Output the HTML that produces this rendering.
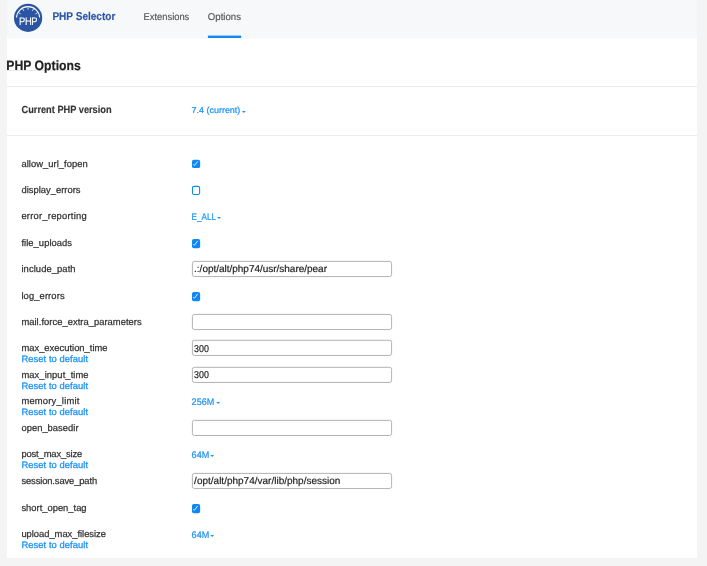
<!DOCTYPE html>
<html lang="en">
<head>
<meta charset="utf-8">
<title>PHP Selector</title>
<style>
html,body{margin:0;padding:0;}
body{width:707px;height:566px;background:#f4f4f4;position:relative;overflow:hidden;font-family:"Liberation Sans",sans-serif;color:#333;font-size:9.4px;}
#wrap{position:absolute;left:0;top:0;width:707px;height:566px;will-change:transform;}
#panel{position:absolute;left:7px;top:0;width:690px;height:558px;background:#fff;}
#hdr{position:absolute;left:7px;top:0;width:690px;height:39px;background:linear-gradient(to bottom,#f7f8fa 0,#f7f8fa 38px,#f9fafb 38px,#f9fafb 39px);border-radius:0 0 3px 3px;}
.hr{position:absolute;left:7px;width:690px;height:1px;background:#ececec;}
#ov{position:absolute;left:0;top:0;font-family:"Liberation Sans",sans-serif;text-rendering:geometricPrecision;}
#ov text{white-space:pre;}
</style>
</head>
<body>
<div id="wrap">
<div id="panel"></div>
<div id="hdr"></div>
<div class="hr" style="top:86px"></div>
<div class="hr" style="top:135px"></div>
<div style="position:absolute;left:7px;top:70px;width:74px;height:1px;background:#e4eaed"></div>
<svg id="ov" width="707" height="566" viewBox="0 0 707 566">
<g transform="translate(14 3.8)">
  <circle cx="14.1" cy="14.1" r="14.1" fill="#2a55a3"/>
  <path d="M2.52 13.75A11.6 11.6 0 0 1 25.68 13.75" fill="none" stroke="#fff" stroke-width="1.1"/>
  <path d="M23.28 9.15L21.46 10.20M19.40 5.27L18.35 7.09M14.10 3.85L14.10 5.95M8.80 5.27L9.85 7.09M4.92 9.15L6.74 10.20" stroke="#fff" stroke-width="0.9" opacity="0.9" fill="none"/>
  <text transform="translate(14.15 21) rotate(0.02) scale(0.86 1)" text-anchor="middle" font-size="10.9" fill="#fff" stroke="#fff" stroke-width="0.12" letter-spacing="-0.45">PHP</text>
</g>
<rect x="207.9" y="35.6" width="33.2" height="2.4" fill="#1489f2"/>
<rect x="191.95" y="159.8" width="8.2" height="8.3" rx="1.9" fill="#0f87f4"/>
<path d="M193.25 164.55L194.40 165.45L197.75 161.40" fill="none" stroke="#fff" stroke-width="0.95" stroke-opacity="0.9"/>
<rect x="192.5" y="186.35000000000002" width="7.1" height="8.200000000000001" rx="1.6" fill="#fff" stroke="#0f8bf4" stroke-width="1.1"/>
<rect x="191.95" y="239.0" width="8.2" height="9.2" rx="1.9" fill="#0f87f4"/>
<path d="M193.25 244.27L194.40 245.26L197.75 240.77" fill="none" stroke="#fff" stroke-width="0.95" stroke-opacity="0.9"/>
<rect x="192.4" y="261.40" width="199.2" height="15.15" rx="2.1" fill="#fff" stroke="#9e9e9e" stroke-width="0.8"/>
<rect x="191.95" y="292.0" width="8.2" height="9.2" rx="1.9" fill="#0f87f4"/>
<path d="M193.25 297.27L194.40 298.26L197.75 293.77" fill="none" stroke="#fff" stroke-width="0.95" stroke-opacity="0.9"/>
<rect x="192.4" y="314.40" width="199.2" height="15.15" rx="2.1" fill="#fff" stroke="#9e9e9e" stroke-width="0.8"/>
<rect x="192.4" y="340.30" width="199.2" height="15.15" rx="2.1" fill="#fff" stroke="#9e9e9e" stroke-width="0.8"/>
<rect x="192.4" y="367.30" width="199.2" height="15.15" rx="2.1" fill="#fff" stroke="#9e9e9e" stroke-width="0.8"/>
<rect x="192.4" y="420.35" width="199.2" height="15.15" rx="2.1" fill="#fff" stroke="#9e9e9e" stroke-width="0.8"/>
<rect x="192.4" y="473.40" width="199.2" height="15.15" rx="2.1" fill="#fff" stroke="#9e9e9e" stroke-width="0.8"/>
<rect x="191.95" y="504.0" width="8.2" height="9.2" rx="1.9" fill="#0f87f4"/>
<path d="M193.25 509.27L194.40 510.26L197.75 505.77" fill="none" stroke="#fff" stroke-width="0.95" stroke-opacity="0.9"/>
<path d="M241.90 110.90h3.9l-1.95 2zM217.10 216.90h3.9l-1.95 2zM216.20 401.90h3.9l-1.95 2zM210.20 455.05h3.9l-1.95 2zM210.20 535.05h3.9l-1.95 2z" fill="#1e94f6"/>
<text id="t_title" transform="translate(52.40 20.20) rotate(0.02) scale(0.8900 1)" font-size="11.3" fill="#2a56a6" font-weight="700" stroke="#2a56a6" stroke-width="0.15">PHP Selector</text>
<text id="t_ext" transform="translate(143.60 20.10) rotate(0.02) scale(0.9450 1)" font-size="9.9" fill="#555" stroke="#555" stroke-width="0.15">Extensions</text>
<text id="t_opt" transform="translate(207.80 20.10) rotate(0.02) scale(0.9750 1)" font-size="9.9" fill="#555" stroke="#555" stroke-width="0.15">Options</text>
<text id="t_h1" transform="translate(6.30 70.30) rotate(0.02) scale(0.9050 1)" font-size="13.5" fill="#222" font-weight="700" stroke="#222" stroke-width="0.2">PHP Options</text>
<text id="t_cur" transform="translate(21.50 113.30) rotate(0.02) scale(0.8880 1)" font-size="10.4" fill="#333" font-weight="700" stroke="#333" stroke-width="0.15">Current PHP version</text>
<text id="t_ver" transform="translate(191.50 113.40) rotate(0.02) scale(1.0320 1)" font-size="8.7" fill="#1e94f6" stroke="#1e94f6" stroke-width="0.24">7.4 (current)</text>
<text id="l0" transform="translate(21.40 167.00) rotate(0.02) scale(1.0000 1)" font-size="9.4" fill="#333" letter-spacing="0.043" stroke="#333" stroke-width="0.25">allow_url_fopen</text>
<text id="l1" transform="translate(21.40 193.00) rotate(0.02) scale(1.0000 1)" font-size="9.4" fill="#333" letter-spacing="0.015" stroke="#333" stroke-width="0.25">display_errors</text>
<text id="l2" transform="translate(21.40 218.90) rotate(0.02) scale(1.0000 1)" font-size="9.4" fill="#333" letter-spacing="0.230" stroke="#333" stroke-width="0.25">error_reporting</text>
<text id="v2" transform="translate(191.60 219.85) rotate(0.02) scale(0.8560 1)" font-size="9.5" fill="#1e94f6" stroke="#1e94f6" stroke-width="0.22">E_ALL</text>
<text id="l3" transform="translate(21.40 245.80) rotate(0.02) scale(1.0000 1)" font-size="9.4" fill="#333" letter-spacing="0.054" stroke="#333" stroke-width="0.25">file_uploads</text>
<text id="l4" transform="translate(21.40 272.20) rotate(0.02) scale(1.0000 1)" font-size="9.4" fill="#333" letter-spacing="0.090" stroke="#333" stroke-width="0.25">include_path</text>
<text id="v4" transform="translate(194.10 271.90) rotate(0.02) scale(1.0000 1)" font-size="10.0" fill="#222" letter-spacing="-0.018" stroke="#222" stroke-width="0.18">.:/opt/alt/php74/usr/share/pear</text>
<text id="l5" transform="translate(21.40 298.90) rotate(0.02) scale(1.0000 1)" font-size="9.4" fill="#333" letter-spacing="0.110" stroke="#333" stroke-width="0.25">log_errors</text>
<text id="l6" transform="translate(21.40 324.85) rotate(0.02) scale(1.0000 1)" font-size="9.4" fill="#333" letter-spacing="0.038" stroke="#333" stroke-width="0.25">mail.force_extra_parameters</text>
<text id="l7" transform="translate(21.40 350.60) rotate(0.02) scale(1.0000 1)" font-size="9.4" fill="#333" letter-spacing="0.010" stroke="#333" stroke-width="0.25">max_execution_time</text>
<text id="r7" transform="translate(21.40 361.90) rotate(0.02) scale(1.0000 1)" font-size="9.4" fill="#1e94f6" letter-spacing="0.067" stroke="#1e94f6" stroke-width="0.3">Reset to default</text>
<text id="v7" transform="translate(194.10 351.90) rotate(0.02) scale(0.8850 1)" font-size="10.0" fill="#222" stroke="#222" stroke-width="0.18">300</text>
<text id="l8" transform="translate(21.40 377.70) rotate(0.02) scale(1.0000 1)" font-size="9.4" fill="#333" letter-spacing="0.077" stroke="#333" stroke-width="0.25">max_input_time</text>
<text id="r8" transform="translate(21.40 388.80) rotate(0.02) scale(1.0000 1)" font-size="9.4" fill="#1e94f6" letter-spacing="0.067" stroke="#1e94f6" stroke-width="0.3">Reset to default</text>
<text id="v8" transform="translate(194.10 377.90) rotate(0.02) scale(0.8850 1)" font-size="10.0" fill="#222" stroke="#222" stroke-width="0.18">300</text>
<text id="l9" transform="translate(21.40 403.70) rotate(0.02) scale(1.0000 1)" font-size="9.4" fill="#333" letter-spacing="0.200" stroke="#333" stroke-width="0.25">memory_limit</text>
<text id="r9" transform="translate(21.40 414.95) rotate(0.02) scale(1.0000 1)" font-size="9.4" fill="#1e94f6" letter-spacing="0.067" stroke="#1e94f6" stroke-width="0.3">Reset to default</text>
<text id="v9" transform="translate(191.60 404.85) rotate(0.02) scale(0.9530 1)" font-size="9.5" fill="#1e94f6" stroke="#1e94f6" stroke-width="0.22">256M</text>
<text id="l10" transform="translate(21.40 430.90) rotate(0.02) scale(1.0000 1)" font-size="9.4" fill="#333" letter-spacing="0.030" stroke="#333" stroke-width="0.25">open_basedir</text>
<text id="l11" transform="translate(21.40 456.55) rotate(0.02) scale(1.0000 1)" font-size="9.4" fill="#333" letter-spacing="-0.136" stroke="#333" stroke-width="0.25">post_max_size</text>
<text id="r11" transform="translate(21.40 467.70) rotate(0.02) scale(1.0000 1)" font-size="9.4" fill="#1e94f6" letter-spacing="0.067" stroke="#1e94f6" stroke-width="0.3">Reset to default</text>
<text id="v11" transform="translate(191.60 458.00) rotate(0.02) scale(0.9550 1)" font-size="9.5" fill="#1e94f6" stroke="#1e94f6" stroke-width="0.22">64M</text>
<text id="l12" transform="translate(21.40 483.50) rotate(0.02) scale(1.0000 1)" font-size="9.4" fill="#333" letter-spacing="-0.120" stroke="#333" stroke-width="0.25">session.save_path</text>
<text id="v12" transform="translate(194.10 484.00) rotate(0.02) scale(1.0000 1)" font-size="10.0" fill="#222" letter-spacing="0.002" stroke="#222" stroke-width="0.18">/opt/alt/php74/var/lib/php/session</text>
<text id="l13" transform="translate(21.40 510.50) rotate(0.02) scale(1.0000 1)" font-size="9.4" fill="#333" stroke="#333" stroke-width="0.25">short_open_tag</text>
<text id="l14" transform="translate(21.40 537.00) rotate(0.02) scale(1.0000 1)" font-size="9.4" fill="#333" letter-spacing="-0.022" stroke="#333" stroke-width="0.25">upload_max_filesize</text>
<text id="r14" transform="translate(21.40 547.60) rotate(0.02) scale(1.0000 1)" font-size="9.4" fill="#1e94f6" letter-spacing="0.067" stroke="#1e94f6" stroke-width="0.3">Reset to default</text>
<text id="v14" transform="translate(191.60 538.00) rotate(0.02) scale(0.9550 1)" font-size="9.5" fill="#1e94f6" stroke="#1e94f6" stroke-width="0.22">64M</text>
</svg>
</div>
</body>
</html>
